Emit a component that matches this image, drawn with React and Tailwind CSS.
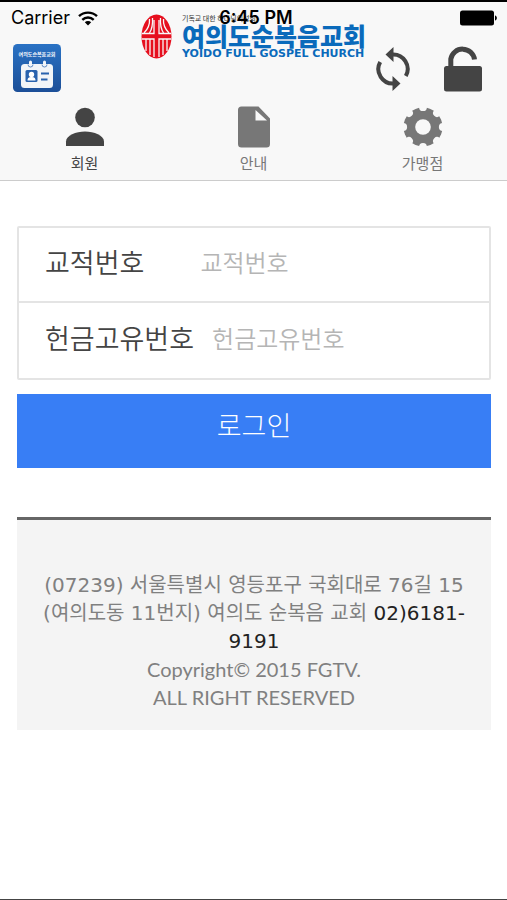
import React, { useState } from "react";

const PersonIcon = () => (
  <svg width="40" height="42" viewBox="0 0 40 42" fill="currentColor" aria-hidden="true">
    <circle cx="20" cy="11.5" r="9.8" />
    <path d="M1 40v-4.500C1 29.500 11 25.500 20 25.500s19 4 19 10V40z" />
  </svg>
);

const FileIcon = () => (
  <svg width="40" height="42" viewBox="0 0 40 42" fill="currentColor" aria-hidden="true">
    <path
      fillRule="evenodd"
      d="M7 .5h17.500L36 12.500v25.500a3.500 3.500 0 0 1-3.500 3.500H7.500A3.500 3.500 0 0 1 4 38V4A3.500 3.500 0 0 1 7.500 .5zM21.500 4V14.500h11.500z"
    />
  </svg>
);

const GearIcon = () => (
  <svg width="40" height="42" viewBox="0 0 40 42" aria-hidden="true">
    <mask id="gear">
      <circle cx="20" cy="21" r="19.500" fill="white" />
      <circle cx="20" cy="21" r="7.800" fill="black" />
      {[0, 45, 90, 135, 180, 225, 270, 315].map(angle => (
        <circle
          key={angle}
          cx="20"
          cy="1.200"
          r="3.900"
          fill="black"
          transform={`rotate(${angle} 20 21)`}
        />
      ))}
    </mask>
    <rect width="40" height="42" fill="currentColor" mask="url(#gear)" />
  </svg>
);

const SyncIcon = () => (
  <svg width="36" height="46" viewBox="0 0 36 46" aria-hidden="true">
    <g fill="none" stroke="currentColor" strokeWidth="4">
      <path d="M17 8.500A14.500 14.500 0 0 1 30.800 30" />
      <path d="M19 37.500A14.500 14.500 0 0 1 5.200 16" />
    </g>
    <path d="M18.500 1v15L10.500 8.500zM17.500 30v15l8-7.500z" fill="currentColor" />
  </svg>
);

const LockIcon = () => (
  <svg width="40" height="46" viewBox="0 0 40 46" aria-hidden="true">
    <path
      d="M7.800 22V13A12 12 0 0 1 31.500 13.500"
      fill="none"
      stroke="currentColor"
      strokeWidth="5"
    />
    <rect x="1" y="20" width="38" height="25.500" rx="2.500" fill="currentColor" />
  </svg>
);

const WifiIcon = () => (
  <svg width="20" height="15" viewBox="0 0 20 15" aria-hidden="true">
    <g fill="none" stroke="black" strokeWidth="2.400">
      <path d="M1 5.200a13 13 0 0 1 18 0" />
      <path d="M4.300 8.800a8.200 8.200 0 0 1 11.400 0" />
    </g>
    <path d="M10 14.500 6.800 11.300a4.600 4.600 0 0 1 6.400 0z" />
  </svg>
);

const BatteryIcon = () => (
  <svg width="37" height="16" viewBox="0 0 37 16" aria-hidden="true">
    <rect width="34" height="15" y=".5" rx="2.500" />
    <path d="M35 5.500c2.500.5 2.500 4.500 0 5z" />
  </svg>
);

const AppIcon = () => (
  <svg width="48" height="48" viewBox="0 0 48 48" aria-hidden="true">
    <defs>
      <linearGradient id="appBg" x1="0" y1="0" x2="0" y2="1">
        <stop offset="0" stopColor="#2a72c4" />
        <stop offset="1" stopColor="#1c4f98" />
      </linearGradient>
    </defs>
    <rect width="48" height="48" rx="4.500" fill="url(#appBg)" />
    <text
      x="24"
      y="12"
      textAnchor="middle"
      fill="white"
      className="text-[5px] font-bold"
    >
      여의도순복음교회
    </text>
    <rect x="8" y="20" width="32" height="24" rx="3.500" fill="#f2f5f8" />
    <path
      d="M17.500 18v3M31.500 18v3"
      stroke="#f2f5f8"
      strokeWidth="3"
      strokeLinecap="round"
    />
    <path
      d="M15 20.500a2.500 2.500 0 0 0 5 0M29 20.500a2.500 2.500 0 0 0 5 0"
      fill="none"
      stroke="#2862ae"
      strokeWidth=".7"
    />
    <rect x="12.500" y="26" width="12" height="12" rx="1.500" fill="#2862ae" />
    <circle cx="18.500" cy="30.500" r="2.700" fill="white" />
    <path d="M14.500 36.500c0-3 2-3.500 4-3.500s4 .5 4 3.500z" fill="white" />
    <path d="M28 29.500h8M28 35.500h6.500" stroke="#2862ae" strokeWidth="2" />
  </svg>
);

// red oval with a cross cut out of the rays
const ChurchMark = () => (
  <svg width="31" height="45" viewBox="0 0 31 45" aria-hidden="true">
    <ellipse cx="15.500" cy="22.500" rx="15" ry="22" fill="#e60f1e" />
    <g fill="none" stroke="#f8f8f8" strokeWidth="1.300">
      <path d="M13 6v13.500H1M18 6v13.500H30M1 25h12V43M30 25H18V43" />
      <path d="M8.500 5C9 11 7 15 3 19M22.500 5c-.5 6 1.500 10 5.500 14" />
      <path d="M11.500 4c.5 7-.5 11-3 15M19.500 4c-.5 7 .5 11 3 15" />
      <path d="M9 25v16M5 25v12M22 25v16M26 25v12" />
    </g>
  </svg>
);

const tabs = [
  { id: "member", label: "회원", Icon: PersonIcon },
  { id: "guide", label: "안내", Icon: FileIcon },
  { id: "store", label: "가맹점", Icon: GearIcon },
];

const fields = [
  { id: "parishNo", label: "교적번호", inputClass: "ml-14" },
  { id: "offeringNo", label: "헌금고유번호", inputClass: "ml-[18px]" },
];

const StatusBar = () => (
  <div className="absolute inset-x-0 top-0 grid h-8 grid-cols-[1fr_auto_1fr] items-center pr-[10px] pl-[11px] font-['Inter','Liberation_Sans',sans-serif] text-lg text-black">
    <div className="flex items-center gap-2">
      <span>Carrier</span>
      <WifiIcon />
    </div>
    <span className="pl-1 font-semibold">6:45 PM</span>
    <div className="flex justify-end">
      <BatteryIcon />
    </div>
  </div>
);

const App = () => {
  const [activeTab, setActiveTab] = useState("member");
  const [values, setValues] = useState({ parishNo: "", offeringNo: "" });

  const handleChange = e =>
    setValues({ ...values, [e.target.name]: e.target.value });

  return (
    <div className="flex min-h-screen flex-col border-t-2 border-b border-t-black border-b-[#444] bg-white font-['Noto_Sans_CJK_KR',sans-serif]">
      <header className="relative border-b border-[#ccc] bg-[#f8f8f8]">
        <div className="grid grid-cols-[1fr_auto_1fr] items-start pt-3 pb-2">
          <div className="pt-[30px] pl-[13px]">
            <AppIcon />
          </div>
          <div className="flex gap-[10px]">
            <ChurchMark />
            <div className="flex flex-col whitespace-nowrap text-[#0a6abb]">
              <span className="text-[7px] leading-[9px] text-[#333]">
                기독교 대한 하나님의성회
              </span>
              <span className="text-[25px] leading-6 font-black">
                여의도순복음교회
              </span>
              <span className="font-['DejaVu_Sans',sans-serif] text-[11px] leading-[14px] font-bold">
                YOIDO FULL GOSPEL CHURCH
              </span>
            </div>
          </div>
          <div className="flex justify-end gap-8 pt-8 pr-6 text-[#444]">
            <button type="button" aria-label="새로고침">
              <SyncIcon />
            </button>
            <button type="button" aria-label="잠금 해제">
              <LockIcon />
            </button>
          </div>
        </div>
        <nav className="grid grid-cols-3 pt-[6px] pb-1">
          {tabs.map(({ id, label, Icon }) => (
            <button
              key={id}
              type="button"
              onClick={() => setActiveTab(id)}
              className={`flex flex-col items-center gap-[3px] pb-px text-[15px] leading-6 ${
                activeTab === id ? "text-[#444]" : "text-[#777]"
              }`}
            >
              <Icon />
              {label}
            </button>
          ))}
        </nav>
        <StatusBar />
      </header>

      <main className="pt-[45px] pr-4 pl-[17px]">
        <form onSubmit={e => e.preventDefault()}>
          <div className="divide-y-2 divide-[#e4e4e4] rounded-xs border-2 border-[#e4e4e4]">
            {fields.map(field => (
              <div key={field.id} className="flex h-[75px] items-center pb-[5px] pl-[26px]">
                <label
                  htmlFor={field.id}
                  className="shrink-0 text-[27px] font-[350] text-[#444]"
                >
                  {field.label}
                </label>
                <input
                  id={field.id}
                  name={field.id}
                  type="text"
                  value={values[field.id]}
                  onChange={handleChange}
                  placeholder={field.label}
                  className={`min-w-0 flex-1 text-2xl font-[350] text-[#444] outline-none placeholder:text-[#b5b5b5] ${field.inputClass}`}
                />
              </div>
            ))}
          </div>
          <button
            type="submit"
            className="mt-[14px] h-[74px] w-full bg-[#387ef5] pb-3 text-[27px] font-light text-white"
          >
            로그인
          </button>
        </form>

        <footer className="mt-[49px] border-t-3 border-[#666] bg-[#f4f4f4] px-4 pt-[51px] pb-[19px] text-center text-xl leading-7 text-[#808080]">
          <address className="font-['DejaVu_Sans','Noto_Sans_CJK_KR',sans-serif] not-italic">
            (07239) 서울특별시 영등포구 국회대로 76길 15
            <br />
            (여의도동 11번지) 여의도 순복음 교회{" "}
            <a href="tel:0261819191" className="text-[#222]">
              02)6181-
              <br />
              9191
            </a>
          </address>
          <p className="font-['Lato','Noto_Sans_CJK_KR',sans-serif]">
            Copyright© 2015 FGTV.
            <br />
            ALL RIGHT RESERVED
          </p>
        </footer>
      </main>
    </div>
  );
};

export default App;
